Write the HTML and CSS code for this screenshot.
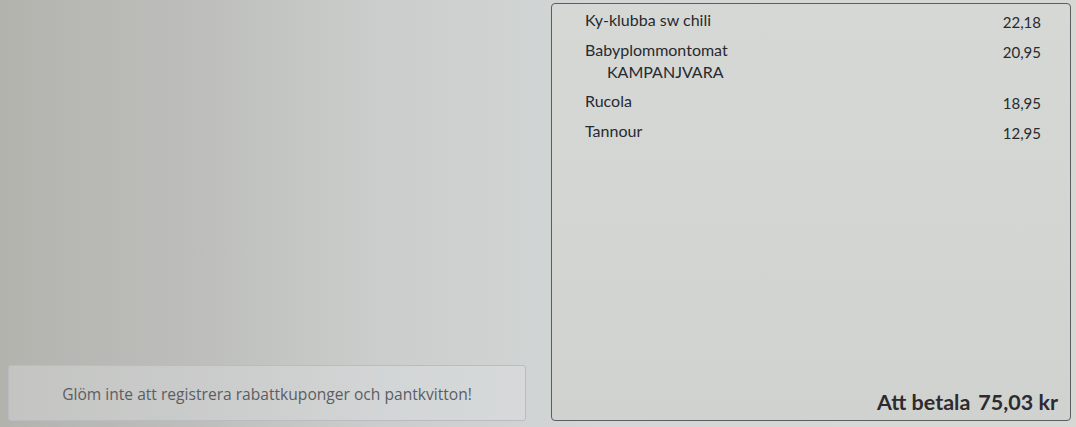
FILE: index.html
```html
<!DOCTYPE html>
<html lang="sv">
<head>
<meta charset="utf-8">
<title>Kassa</title>
<link rel="stylesheet" href="styles.css">
</head>
<body>
<div class="screen">
  <div class="left">
    <div class="notice">Glöm inte att registrera rabattkuponger och pantkvitton!</div>
  </div>
  <div class="receipt">
    <ul class="items">
      <li class="item"><span class="name">Ky-klubba sw chili</span><span class="price">22,18</span></li>
      <li class="item"><span class="name">Babyplommontomat</span><span class="price">20,95</span><span class="sub">KAMPANJVARA</span></li>
      <li class="item"><span class="name">Rucola</span><span class="price">18,95</span></li>
      <li class="item"><span class="name">Tannour</span><span class="price">12,95</span></li>
    </ul>
    <div class="total"><span class="label">Att betala</span><span class="sum">75,03 kr</span></div>
  </div>
</div>
</body>
</html>
```
FILE: styles.css
```css
html, body {
  margin: 0;
  padding: 0;
}
body {
  width: 1076px;
  height: 427px;
  overflow: hidden;
  background: linear-gradient(to right, #b3b3ae 0%, #bdbebb 18%, #cacdcb 35%, #d2d6d6 55%, #d5d8d6 80%, #d6d8d4 100%);
  font-family: "Lato", "Open Sans", sans-serif;
  color: #272a30;
}
.screen {
  display: flex;
  height: 427px;
  box-sizing: border-box;
  padding: 3px 5px 6px 8px;
  gap: 25px;
}
.left {
  flex: 0 0 518px;
  display: flex;
  flex-direction: column;
  justify-content: flex-end;
}
.notice {
  height: 56px;
  box-sizing: border-box;
  border: 1px solid #b9bdc3;
  border-radius: 3px;
  background: rgba(226, 230, 232, 0.35);
  display: flex;
  align-items: center;
  justify-content: center;
  padding-top: 2px;
  font-family: "Open Sans", "Noto Sans", sans-serif;
  font-size: 15.6px;
  color: #5c5d63;
}
.receipt {
  flex: 1;
  border: 1px solid #5b5d60;
  border-radius: 4px;
  background: linear-gradient(to bottom, #d6d8d5 0%, #d3d5d2 60%, #d0d2cf 100%);
  display: flex;
  flex-direction: column;
  justify-content: space-between;
  padding: 5px 12px 4px 33px;
}
.items {
  list-style: none;
  margin: 0;
  padding: 0 17px 0 0;
}
.item {
  display: grid;
  grid-template-columns: 1fr auto;
  align-items: start;
  line-height: 22px;
  font-size: 16px;
  margin-bottom: 7.5px;
}
.price {
  padding-top: 2px;
  margin-bottom: -2px;
  font-size: 15px;
}
.sub {
  grid-column: 1;
  padding-left: 22px;
}
.total {
  align-self: flex-end;
  font-family: "Lato", "Open Sans", sans-serif;
  font-weight: 700;
  font-size: 21.5px;
  line-height: 28px;
  color: #2d2a30;
  display: flex;
  gap: 8px;
}
```
